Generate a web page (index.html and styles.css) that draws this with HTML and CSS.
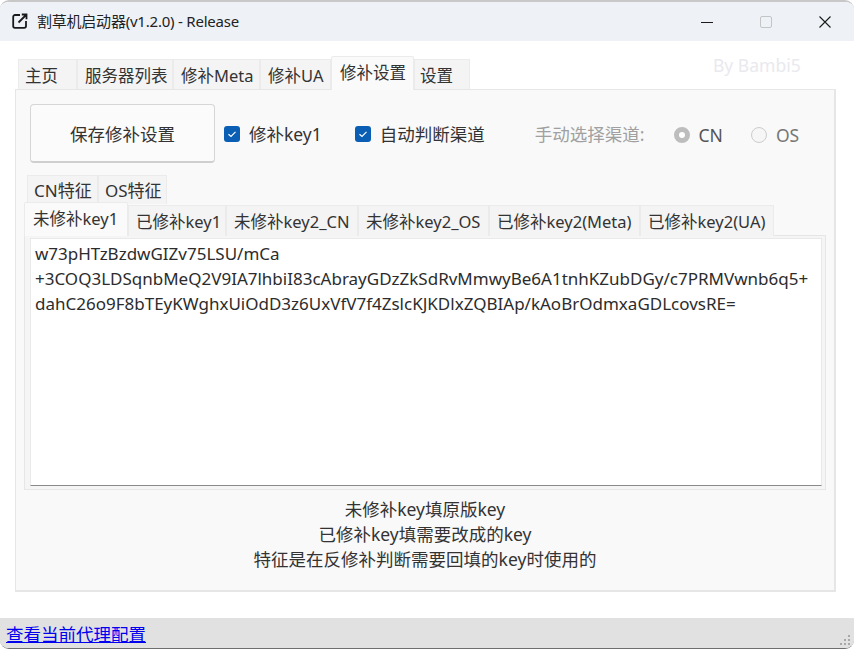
FILE: index.html
```html
<!DOCTYPE html>
<html lang="zh-CN">
<head>
<meta charset="utf-8">
<title>割草机启动器</title>
<link rel="stylesheet" href="styles.css">
</head>
<body>
<div class="window">
  <header class="titlebar">
    <svg class="app-icon" width="16" height="16" viewBox="0 0 16 16" fill="none" stroke="#1a1a1a" stroke-width="1.8"><path d="M8 2H3A1.800 1.800 0 0 0 1.200 3.800V13A1.800 1.800 0 0 0 3 14.800H12.200A1.800 1.800 0 0 0 14 13V8"/><path d="M6.500 9.500 14.500 1.500M9.800 1.500H14.500V6.200"/></svg>
    <span class="title">割草机启动器(v1.2.0) - Release</span>
    <div class="win-controls">
      <span class="win-btn"><svg width="14" height="14" viewBox="0 0 14 14" stroke="#1a1a1a"><path d="M1 7.500H13"/></svg></span>
      <span class="win-btn"><svg width="14" height="14" viewBox="0 0 14 14" fill="none" stroke="#c4c4c4"><rect x="1.500" y="1.500" width="11" height="11" rx="1.500"/></svg></span>
      <span class="win-btn"><svg width="14" height="14" viewBox="0 0 14 14" stroke="#1a1a1a" stroke-width="1.100"><path d="M1.500 1.500 12.500 12.500M12.500 1.500 1.500 12.500"/></svg></span>
    </div>
  </header>
  <main class="content">
    <span class="watermark">By Bambi5</span>
    <nav class="tabs main-tabs">
      <span class="tab">主页</span>
      <span class="tab">服务器列表</span>
      <span class="tab">修补Meta</span>
      <span class="tab">修补UA</span>
      <span class="tab active">修补设置</span>
      <span class="tab">设置</span>
    </nav>
    <section class="pane">
      <div class="toolbar">
        <button class="save-btn">保存修补设置</button>
        <label class="check first"><span class="box"><svg width="10" height="10" viewBox="0 0 10 10" fill="none" stroke="#fff" stroke-width="1.200"><path d="M1.500 5.200 4 7.500 8.500 2.800"/></svg></span>修补key1</label>
        <label class="check second"><span class="box"><svg width="10" height="10" viewBox="0 0 10 10" fill="none" stroke="#fff" stroke-width="1.200"><path d="M1.500 5.200 4 7.500 8.500 2.800"/></svg></span>自动判断渠道</label>
        <span class="manual">手动选择渠道:</span>
        <label class="radio cn"><span class="dot on"></span>CN</label>
        <label class="radio os"><span class="dot"></span>OS</label>
      </div>
      <nav class="tabs region-tabs">
        <span class="tab">CN特征</span>
        <span class="tab">OS特征</span>
      </nav>
      <nav class="tabs key-tabs">
        <span class="tab active">未修补key1</span>
        <span class="tab">已修补key1</span>
        <span class="tab">未修补key2_CN</span>
        <span class="tab">未修补key2_OS</span>
        <span class="tab">已修补key2(Meta)</span>
        <span class="tab">已修补key2(UA)</span>
      </nav>
      <div class="key-pane">
        <div class="editor">
          <div>w73pHTzBzdwGIZv75LSU/mCa</div>
          <div>+3COQ3LDSqnbMeQ2V9IA7lhbiI83cAbrayGDzZkSdRvMmwyBe6A1tnhKZubDGy/c7PRMVwnb6q5+</div>
          <div>dahC26o9F8bTEyKWghxUiOdD3z6UxVfV7f4ZslcKJKDlxZQBIAp/kAoBrOdmxaGDLcovsRE=</div>
        </div>
      </div>
      <div class="help">
        <p>未修补key填原版key</p>
        <p>已修补key填需要改成的key</p>
        <p>特征是在反修补判断需要回填的key时使用的</p>
      </div>
    </section>
  </main>
  <footer class="statusbar">
    <a class="proxy-link" href="#">查看当前代理配置</a>
    <svg class="grip" width="12" height="12" viewBox="0 0 12 12" fill="#a8a8a8"><rect x="9" y="1" width="2" height="2"/><rect x="5" y="5" width="2" height="2"/><rect x="9" y="5" width="2" height="2"/><rect x="1" y="9" width="2" height="2"/><rect x="5" y="9" width="2" height="2"/><rect x="9" y="9" width="2" height="2"/></svg>
  </footer>
</div>
</body>
</html>
```
FILE: styles.css
```css
* { box-sizing: border-box; }
html, body { margin: 0; height: 100%; background: #fff; }
body {
  font-family: "Noto Sans", "Noto Sans CJK SC", sans-serif;
  font-size: 17.500px;
  color: #1f1f1f;
  overflow: hidden;
}
.window {
  width: 854px;
  height: 649px;
  display: flex;
  flex-direction: column;
  border-top: 2px solid #c8c8c8;
  border-bottom: 1px solid #6e6e6e;
  border-radius: 9px;
  overflow: hidden;
  background: #fff;
}
.titlebar {
  height: 39px;
  flex: none;
  display: flex;
  align-items: center;
  background: #eef2f7;
  padding-left: 12px;
  font-size: 15px;
}
.app-icon { margin-right: 9px; margin-top: -1px; }
.title { color: #222; letter-spacing: -.22px; margin-top: -2px; }
.win-controls { margin-left: auto; display: flex; }
.win-btn { width: 59px; height: 39px; display: flex; align-items: center; justify-content: center; }
.content { flex: 1; position: relative; padding: 15px 18px 26px 15px; display: flex; flex-direction: column; }
.watermark { position: absolute; left: 713px; top: 12px; color: #e9e9ee; line-height: 24px; }
.tabs { display: grid; align-items: end; flex: none; }
.tab {
  height: 31px;
  display: flex;
  align-items: center;
  background: #f4f4f4;
  border: 1px solid #ebebeb;
  border-bottom: 0;
  white-space: nowrap;
  color: #333;
  font-size: 16.500px;
  padding-left: 7px;
}
.tab.active { height: 34px; background: #fafafa; padding-bottom: 4px; padding-left: 8px; border-radius: 2px 2px 0 0; position: relative; z-index: 1; }
.main-tabs { margin-left: 3px; grid-template-columns: 59px 96px 87px 71px 83px 56px; justify-content: start; }
.main-tabs .tab:first-child, .main-tabs .tab:last-child { padding-left: 6px; }
.main-tabs .tab:last-child { padding-left: 5px; }
.pane {
  flex: 1;
  background: #f9f9f9;
  border: 1px solid #e6e6e6;
  border-right-width: 2px;
  border-bottom-width: 2px;
  margin-top: -1px;
  padding: 14px 8px 0 8px;
  display: flex;
  flex-direction: column;
}
.toolbar { display: flex; align-items: center; height: 59px; padding-left: 6px; flex: none; }
.save-btn {
  width: 185px;
  height: 59px;
  font: inherit;
  color: #333;
  background: #fbfbfb;
  border: 1px solid #d6d6d6;
  border-bottom: 2px solid #cfcfcf;
  border-radius: 4px;
}
.check { display: flex; align-items: center; gap: 9px; color: #333; }
.check.first { margin-left: 9px; }
.check.second { margin-left: 33px; }
.box { width: 16px; height: 16px; border-radius: 3px; background: #0a5fb4; display: flex; align-items: center; justify-content: center; }
.manual { margin-left: 50px; color: #a0a0a0; }
.radio { display: flex; align-items: center; gap: 9px; color: #555; margin-top: 2px; }
.radio.cn { margin-left: 29px; }
.radio.os { margin-left: 28px; color: #777; }
.dot { width: 16px; height: 16px; border-radius: 50%; border: 1px solid #ccc; background: #f6f6f6; }
.dot.on { border: 5px solid #bdbdbd; background: #fff; }
.region-tabs { margin: 12px 0 0 3px; grid-template-columns: 71px 69px; justify-content: start; }
.region-tabs .tab { height: 29px; font-size: 17px; padding-left: 6px; padding-bottom: 2px; }
.key-tabs { margin-top: -2px; grid-template-columns: 104px 98px 132px 131px 151px 134px; justify-content: start; position: relative; }
.key-tabs .tab { font-size: 16.500px; }
.key-pane { height: 255px; flex: none; width: 802px; margin-top: -1px; padding: 2px 3px 3px 5px; border: 1px solid #e6e6e6; background: #f5f5f5; }
.editor {
  height: 100%;
  background: #fff;
  border: 1px solid #e9e9e9;
  border-bottom: 1px solid #8a8a8a;
  padding: 2px 0 0 4px;
  font-size: 17px;
  line-height: 25px;
  white-space: nowrap;
  color: #2c2c2c;
}
.help { padding-top: 7px; text-align: center; color: #333; }
.help p { margin: 0; line-height: 25px; }
.statusbar {
  height: 30px;
  flex: none;
  background: #e1e1e1;
  display: flex;
  align-items: center;
  justify-content: space-between;
  padding: 0 3px 0 6px;
}
.proxy-link { color: #0000ee; }
.grip { align-self: flex-end; margin-bottom: 2px; }
```
